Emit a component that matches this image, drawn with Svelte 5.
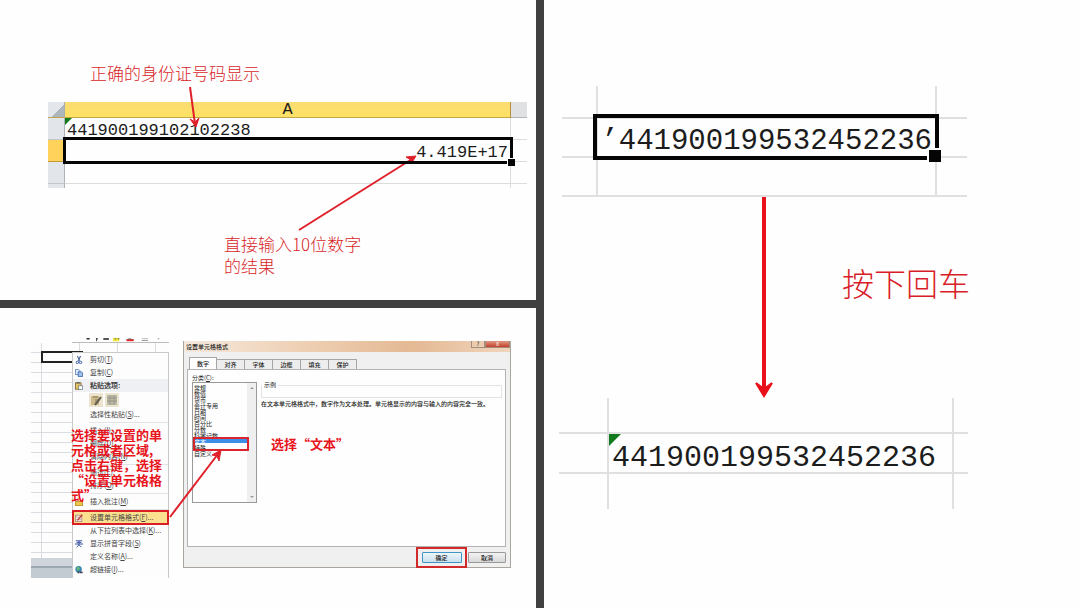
<script lang="ts">
  const menuItems = [
    { label: "剪切", key: "T", icon: "cut" },
    { label: "复制", key: "C", icon: "copy" },
    { label: "粘贴选项:", key: "", icon: "paste", heading: true },
    { label: "选择性粘贴", key: "S", more: true, line: true },
    { label: "插入", key: "I", more: true },
    { label: "删除", key: "D", more: true },
    { label: "清除内容", key: "N", line: true },
    { label: "筛选", key: "E" },
    { label: "排序", key: "O", line: true },
    { label: "插入批注", key: "M", icon: "note", line: true },
    { label: "设置单元格格式", key: "F", icon: "format", more: true },
    { label: "从下拉列表中选择", key: "K", more: true },
    { label: "显示拼音字段", key: "S", icon: "pinyin" },
    { label: "定义名称", key: "A", more: true },
    { label: "超链接", key: "I", icon: "link", more: true }
  ];
  const tabs = ["数字", "对齐", "字体", "边框", "填充", "保护"];
  const categories = [
    "常规", "数值", "货币", "会计专用", "日期", "时间",
    "百分比", "分数", "科学记数", "文本", "特殊", "自定义"
  ];
  let activeTab = $state("数字");
  let category = $state("文本");
</script>

{#snippet icon(name: string)}
  <svg class="icon" viewBox="0 0 10 10" aria-hidden="true">
    {#if name === "cut"}
      <path d="M3 0 L6 6 M7 0 L4 6" stroke="#3d5a94" stroke-width="1.3" />
      <circle cx="3" cy="8" r="1.5" fill="none" stroke="#2f57a8" stroke-width="1.2" />
      <circle cx="7" cy="8" r="1.5" fill="none" stroke="#2f57a8" stroke-width="1.2" />
    {:else if name === "copy"}
      <path d="M0.5 0.5 H4.5 L6 2 V7 H0.5 Z" fill="#dbe8f8" stroke="#5079ad" />
      <path d="M4 3.5 H8 L9.5 5 V9.5 H4 Z" fill="#9fc0ea" stroke="#2f5fa8" />
    {:else if name === "paste"}
      <rect x="0.5" y="1" width="7" height="8" fill="#e5c465" stroke="#77622d" />
      <rect x="2" y="0" width="4" height="2" fill="#666" />
      <path d="M4.5 4.5 H9.5 V9.5 H4.5 Z" fill="#fff" stroke="#6d7888" />
    {:else if name === "note"}
      <rect x="0.5" y="4.5" width="9" height="5" fill="#edc64d" stroke="#b98e1f" />
      <path d="M2 2 L5 4 L4 0 Z" fill="#d22" />
    {:else if name === "format"}
      <rect x="0.5" y="1.5" width="8" height="8" fill="#f6efec" stroke="#a9837c" />
      <path d="M1 4 H8 M1 7 H8" stroke="#b9a" />
      <path d="M3 8 L9 1" stroke="#c33c2d" stroke-width="1.7" />
    {:else if name === "pinyin"}
      <path d="M1 1 H9 M2 3 H8 M0 5 H10 M5 1 V6 M2 9 L5 6 L8 9" fill="none" stroke="#344f9e" stroke-width="1.2" />
    {:else if name === "link"}
      <circle cx="4.5" cy="4" r="4" fill="#3687b4" />
      <path d="M2 2 L5 1 L6 4 L3 6 Z" fill="#6ebb6c" />
      <path d="M3 8 h2.5 M6 8 h3.5" stroke="#445" stroke-width="2" />
    {/if}
  </svg>
{/snippet}

<main class="board">
  <div class="column">
    <section class="slide display-slide">
      <p class="callout">正确的身份证号码显示</p>
      <table class="sheet">
        <thead>
          <tr>
            <th class="corner"></th>
            <th class="letter">A</th>
            <th class="next"></th>
          </tr>
        </thead>
        <tbody>
          <tr><th></th><td class="flagged">441900199102102238</td><td></td></tr>
          <tr>
            <th class="current"></th>
            <td class="number">4.419E+17<span class="selection"></span></td>
            <td></td>
          </tr>
          <tr><th></th><td></td><td></td></tr>
          <tr class="cut-row"><th></th><td></td><td></td></tr>
        </tbody>
      </table>
      <p class="callout result">直接输入10位数字<br />的结果</p>
      <svg class="arrows" viewBox="0 0 536 300" preserveAspectRatio="none" aria-hidden="true">
        <path d="M190 87 L195 124" />
        <path class="head" d="M190 119 L195 122 L199 118 L196 127 Z" />
        <path d="M299 230 L412 159" />
        <path class="head" d="M406 157 L416 156 L411 164 L411 160 Z" />
      </svg>
    </section>

    <section class="slide format-slide">
      <div class="excel">
        <svg class="ribbon" viewBox="0 0 97 5" aria-hidden="true">
          <path d="M6 1 h4 M18 1 h2 M18 3 h1" stroke="#333" stroke-width="2" />
          <path d="M27 1 h7" stroke="#555" stroke-width="3" />
          <path d="M39 2 h8" stroke="#f0e63a" stroke-width="4" />
          <path d="M41 1 h2 M45 1 h2" stroke="#444" stroke-width="1" />
          <path d="M58 0 h4 M56 2 h9" stroke="#333" stroke-width="1" />
          <path d="M56 3 h9" stroke="#e22" stroke-width="2" />
          <path d="M75 0 h8 M75 3 h8 M95 1 h2" stroke="#777" />
        </svg>
        <div class="cells"><span class="active-cell"></span></div>
        <div class="status"></div>
        <div class="menu">
          {#each menuItems as item}
            {#if item.heading}
              <div class="item heading">{@render icon("paste")}<span>{item.label}</span></div>
              <div class="paste-options">
                <button aria-label="粘贴">
                  <svg viewBox="0 0 12 12">
                    <rect x="1" y="2" width="8" height="9" fill="#cdbb8d" />
                    <path d="M3 3 h5 M5 6 h5 M5 8 h4" stroke="#867750" />
                    <path d="M5 11 L11 3" stroke="#5e594e" stroke-width="2" />
                  </svg>
                </button>
                <button aria-label="匹配目标格式">
                  <svg viewBox="0 0 12 12">
                    <rect x="1" y="1" width="10" height="10" fill="#b9b7a5" />
                    <path d="M1 4 h10 M1 7 h10 M4 1 v10 M8 1 v10" stroke="#99978a" />
                  </svg>
                </button>
              </div>
            {:else}
              <button class="item" class:marked={item.icon === "format"}>
                {@render icon(item.icon ?? "")}
                <span>{item.label}(<u>{item.key}</u>){item.more ? "..." : ""}</span>
              </button>
            {/if}
            {#if item.line}<hr />{/if}
          {/each}
        </div>
        <p class="note menu-note">选择要设置的单<br />元格或者区域,<br />点击右键，选择<br />“设置单元格格<br />式”</p>
      </div>

      <div class="dialog">
        <header>
          <h2>设置单元格格式</h2>
          <button class="help" aria-label="帮助">?</button>
          <button class="close" aria-label="关闭">x</button>
        </header>
        <nav>
          {#each tabs as tab}
            <button class:active={activeTab === tab} onclick={() => (activeTab = tab)}>{tab}</button>
          {/each}
        </nav>
        <div class="panel">
          <div class="category">
            <label for="category">分类(<u>C</u>):</label>
            <div class="list">
              <select id="category" size="12" bind:value={category}>
                {#each categories as name}
                  <option value={name} class:picked={category === name}>{name}</option>
                {/each}
              </select>
              <div class="scrollbar"><i></i><i class="down"></i></div>
              <span class="list-mark"></span>
            </div>
          </div>
          <div class="detail">
            <fieldset><legend>示例</legend></fieldset>
            <p>在文本单元格格式中，数字作为文本处理。单元格显示的内容与输入的内容完全一致。</p>
            <p class="note">选择“文本”</p>
          </div>
        </div>
        <footer>
          <div class="ok-mark"><button class="ok">确定</button></div>
          <button>取消</button>
        </footer>
      </div>
      <svg class="arrows" viewBox="0 0 536 300" preserveAspectRatio="none" aria-hidden="true">
        <path d="M170 209 L218 146" />
        <path class="head" d="M212 147 L221 142 L219 153 L217 148 Z" />
      </svg>
    </section>
  </div>

  <section class="slide enter-slide">
    <table class="zoomed before">
      <tbody>
        <tr><td></td><td></td><td></td></tr>
        <tr><td></td><td class="number">’441900199532452236<span class="selection"></span></td><td></td></tr>
        <tr><td></td><td></td><td></td></tr>
      </tbody>
    </table>
    <div class="step">
      <svg class="down-arrow" viewBox="0 0 20 202" aria-hidden="true">
        <path d="M10 0 V194" stroke-width="4" />
        <path d="M2 186 L10 192 L18 186 L10 199 Z" fill="#e8101a" stroke-width="2" />
      </svg>
      <p>按下回车</p>
    </div>
    <table class="zoomed after">
      <tbody>
        <tr><td></td><td></td><td></td></tr>
        <tr><td></td><td class="flagged">441900199532452236</td><td></td></tr>
        <tr><td></td><td></td><td></td></tr>
      </tbody>
    </table>
  </section>
</main>

<style>
  :global(body) {
    margin: 0;
    background: #404040;
  }
  * {
    box-sizing: border-box;
  }
  .board {
    display: grid;
    grid-template-columns: 1fr 1fr;
    gap: 8px;
    min-height: 100vh;
    background: #404040;
    font-family: "Noto Sans CJK SC", sans-serif;
  }
  .column {
    display: grid;
    grid-template-rows: 1fr 1fr;
    gap: 8px;
  }
  .slide {
    position: relative;
    background: #fefefe;
  }
  p, h2 {
    margin: 0;
  }
  button {
    font: inherit;
    color: inherit;
    padding: 0;
    border: none;
    background: none;
  }
  table {
    border-collapse: separate;
    border-spacing: 0;
    table-layout: fixed;
  }
  td, th {
    padding: 0;
  }
  .arrows {
    position: absolute;
    inset: 0;
    width: 100%;
    height: 100%;
    fill: none;
    stroke: #e0202a;
    stroke-width: 2;
    pointer-events: none;
  }
  .arrows .head {
    fill: #e0202a;
    stroke-width: 1;
  }

  /* id number shown as text and as a number */
  .display-slide {
    padding: 62px 9px 0 48px;
  }
  .callout {
    padding-left: 42px;
    font-size: 17px;
    font-weight: 300;
    line-height: 22px;
    color: #d81e28;
  }
  .result {
    padding-left: 176px;
    margin-top: 45px;
  }
  .sheet {
    width: 100%;
    margin-top: 18px;
    font-family: "Liberation Mono", monospace;
    font-size: 17px;
    line-height: 16px;
    color: #1c1c1c;
  }
  .sheet tr {
    height: 22px;
  }
  .sheet thead tr {
    height: 16px;
  }
  .sheet thead th {
    height: 16px;
    line-height: 15px;
    font-weight: 400;
    border-bottom: 1px solid #c2a64a;
  }
  .sheet .corner {
    width: 17px;
    background: linear-gradient(135deg, #e3e7ec 60%, #adb5bd 60%);
    border-right: 1px solid #a8adb3;
  }
  .sheet .letter {
    background: linear-gradient(#fadc72, #ffe164);
    border-right: 1px solid #b98e3f;
  }
  .sheet .next {
    width: 16px;
    background: #dfe1e3;
    border-bottom-color: #b5b5b5;
  }
  .sheet tbody th {
    background: #e2e5e9;
    border-right: 1px solid #aeb3b9;
    border-bottom: 1px solid #c4c8cc;
  }
  .sheet tbody .current {
    background: #ffd25c;
    border-color: #c59a36;
  }
  .sheet td {
    position: relative;
    border-right: 1px solid #dcdcdc;
    border-bottom: 1px solid #dcdcdc;
    padding: 0 2px;
    vertical-align: bottom;
  }
  .sheet td:last-child {
    border-right: none;
  }
  .sheet .cut-row {
    height: 4px;
  }
  .sheet .cut-row td,
  .sheet .cut-row th {
    border-bottom: none;
  }
  .number {
    text-align: right;
  }
  .flagged::before {
    content: "";
    position: absolute;
    top: 0;
    left: 0;
    width: 7px;
    height: 7px;
    background: #117a1c;
    clip-path: polygon(0 0, 100% 0, 0 100%);
  }
  .selection {
    position: absolute;
    inset: -3px -3px -3px -2px;
    border: 3px solid #050505;
    z-index: 1;
  }
  .selection::after {
    content: "";
    position: absolute;
    right: -5px;
    bottom: -5px;
    width: 7px;
    height: 7px;
    background: #050505;
    border: solid #fff;
    border-width: 1px 0 0 1px;
  }

  /* context menu and format dialog */
  .format-slide {
    display: flex;
    gap: 14px;
    padding: 30px 25px 0 31px;
  }
  .excel {
    position: relative;
    flex: none;
    display: flex;
    flex-direction: column;
    width: 138px;
    height: 240px;
  }
  .ribbon {
    width: 97px;
    height: 5px;
    margin-left: 41px;
    border-bottom: 1px solid #bbb;
    fill: none;
  }
  .cells {
    position: relative;
    flex: 1;
    background:
      repeating-linear-gradient(90deg, transparent 0 10px, #d9dce0 10px 11px, transparent 11px 38px),
      repeating-linear-gradient(#fdfdfd 0 9px, #d9dce0 9px 10px);
  }
  .active-cell {
    position: absolute;
    top: 8px;
    left: 10px;
    width: 42px;
    height: 12px;
    border: 2px solid #222;
  }
  .status {
    height: 20px;
    background: linear-gradient(#cfd5da 0 8px, #9da7b0 8px 10px, #c3cbd2 10px);
  }
  .menu {
    position: absolute;
    top: 14px;
    left: 41px;
    right: 0;
    bottom: 0;
    border: solid #c9c9c9;
    border-width: 1px 1px 0 1px;
    background: #fdfdfd;
    font-size: 7px;
    line-height: 13px;
    color: #444;
  }
  .item {
    display: flex;
    align-items: center;
    gap: 7px;
    width: 100%;
    height: 13px;
    padding-left: 2px;
    text-align: left;
    white-space: nowrap;
  }
  .icon {
    flex: none;
    width: 8px;
    height: 8px;
  }
  .heading {
    background: #eef0f3;
    font-weight: 700;
  }
  .marked {
    background: #fbe090;
    outline: 2px solid #d91e25;
    outline-offset: -1px;
  }
  .menu hr {
    height: 1px;
    margin: 1px 0 1px 16px;
    border: none;
    background: #e2e4e7;
  }
  .paste-options {
    display: flex;
    gap: 2px;
    height: 16px;
    padding: 1px 0 0 16px;
  }
  .paste-options button {
    width: 14px;
    height: 14px;
    background: #ece4cf;
  }
  .paste-options svg {
    display: block;
    width: 12px;
    height: 12px;
    margin: 1px;
  }
  .note {
    font-size: 13px;
    font-weight: 700;
    line-height: 15px;
    color: #e8141c;
    white-space: nowrap;
  }
  .menu-note {
    position: absolute;
    top: 89px;
    left: 40px;
  }
  .dialog {
    flex: 1;
    align-self: flex-start;
    display: flex;
    flex-direction: column;
    margin-top: 3px;
    border: solid #aaa59f;
    border-width: 0 1px 1px 1px;
    background: #f0f0f0;
    font-size: 6px;
    line-height: 8px;
    color: #222;
  }
  .dialog header {
    display: flex;
    height: 11px;
    background: linear-gradient(90deg, #f6e9dd, #edcdb0 40%, #e4b994 70%, #f0d5bc);
  }
  .dialog h2 {
    flex: 1;
    padding: 1px 0 0 2px;
    font-size: 6px;
    font-weight: 500;
    line-height: 9px;
  }
  .help, .close {
    width: 14px;
    height: 7px;
    border: 1px solid #a38d7c;
    border-top: none;
    line-height: 6px;
  }
  .close {
    width: 25px;
    background: linear-gradient(#dd9a83, #c5402c);
    color: #fff;
  }
  nav {
    display: flex;
    align-items: flex-end;
    height: 17px;
    padding-left: 5px;
  }
  nav button {
    width: 28px;
    height: 10px;
    border: 1px solid #a6a6a6;
    border-width: 1px 1px 0 0;
    background: #ededed;
    font-weight: 500;
  }
  nav .active {
    height: 12px;
    border-left-width: 1px;
    background: #fefefe;
  }
  .panel {
    display: flex;
    gap: 4px;
    height: 178px;
    margin: 0 4px 0 3px;
    padding: 3px 3px 0 4px;
    border: 1px solid #b3b3b3;
    background: #fefefe;
  }
  .category {
    width: 65px;
  }
  .category label {
    display: block;
    height: 9px;
    line-height: 9px;
  }
  .list {
    position: relative;
    display: flex;
    height: 121px;
    border: 1px solid #9a9a9a;
  }
  .list select {
    flex: 1;
    min-width: 0;
    height: 100%;
    padding: 0;
    border: none;
    outline: none;
    overflow: hidden;
    background: #fefefe;
    font: 500 6px/6px "Noto Sans CJK SC", sans-serif;
    color: #222;
  }
  .list option {
    height: 6px;
    min-height: 0;
    padding: 0 0 0 1px;
    font-size: 6px;
    line-height: 6px;
  }
  .list .picked {
    background: #3d8fe8 linear-gradient(#3d8fe8, #3d8fe8);
    color: #fff;
  }
  .scrollbar {
    display: flex;
    flex-direction: column;
    justify-content: space-between;
    align-items: center;
    width: 9px;
    padding: 4px 0;
    background: #efefef;
  }
  .scrollbar i {
    border: 2px solid transparent;
    border-top-width: 0;
    border-bottom: 2px solid #999;
  }
  .scrollbar .down {
    border-top: 2px solid #999;
    border-bottom-width: 0;
  }
  .list-mark {
    position: absolute;
    top: 54px;
    left: 0;
    width: 56px;
    height: 14px;
    border: 2px solid #d9252b;
  }
  .detail {
    flex: 1;
    min-width: 0;
    padding-top: 8px;
  }
  .detail fieldset {
    height: 17px;
    margin: 0;
    padding: 0;
    border: 1px solid #e3e3e3;
  }
  .detail legend {
    padding: 0 2px;
  }
  .detail p {
    margin-top: 2px;
    white-space: nowrap;
    font-weight: 500;
  }
  .detail .note {
    padding-left: 10px;
    margin-top: 28px;
    font-weight: 700;
  }
  .dialog footer {
    display: flex;
    justify-content: flex-end;
    align-items: center;
    gap: 1px;
    height: 20px;
    padding-right: 4px;
  }
  .dialog footer button {
    width: 38px;
    height: 11px;
    border: 1px solid #999;
    border-radius: 1px;
    background: linear-gradient(#f3f3f3, #d8d8d8);
    line-height: 9px;
    font-weight: 500;
  }
  .dialog footer .ok {
    width: 40px;
    border-color: #3f96c4;
    background: linear-gradient(#eef6fb, #c9e0ee);
  }
  .ok-mark {
    display: flex;
    align-items: center;
    justify-content: center;
    width: 51px;
    height: 21px;
    border: 2px solid #d02a2a;
  }

  /* apostrophe typed first, then enter */
  .enter-slide {
    padding-top: 86px;
  }
  .zoomed {
    width: 405px;
    margin-left: 18px;
    font-family: "Liberation Mono", monospace;
    font-size: 29px;
    line-height: 28px;
    color: #1c1c1c;
  }
  .zoomed td {
    position: relative;
    height: 39px;
    border-right: 2px solid #e0e0e0;
    border-bottom: 2px solid #e0e0e0;
    white-space: nowrap;
    vertical-align: bottom;
  }
  .zoomed td:first-child {
    width: 36px;
  }
  .zoomed td:last-child {
    width: 30px;
    border-right: none;
  }
  .zoomed tr:first-child td {
    height: 33px;
  }
  .zoomed .number {
    padding-right: 3px;
  }
  .zoomed .selection {
    inset: -5px -4px -4px -5px;
    border-width: 4px;
  }
  .zoomed .selection::after {
    right: -6px;
    bottom: -6px;
    width: 12px;
    height: 12px;
    border-width: 2px 0 0 2px;
  }
  .step {
    display: flex;
    align-items: center;
    gap: 68px;
    height: 201px;
    padding-left: 210px;
  }
  .down-arrow {
    width: 20px;
    height: 202px;
    fill: none;
    stroke: #e8101a;
  }
  .step p {
    padding-bottom: 32px;
    font-size: 32px;
    font-weight: 300;
    line-height: 40px;
    color: #d81e28;
  }
  .after {
    width: 409px;
    margin-left: 15px;
    font-size: 30px;
  }
  .after td:first-child {
    width: 50px;
  }
  .after td:last-child {
    width: 14px;
  }
  .after tr:first-child td {
    height: 36px;
  }
  .after tr:nth-child(2) td {
    height: 40px;
  }
  .after tr:last-child td {
    height: 35px;
    border-bottom: none;
  }
  .after .flagged {
    padding-left: 3px;
  }
  .after .flagged::before {
    width: 12px;
    height: 12px;
  }
</style>
